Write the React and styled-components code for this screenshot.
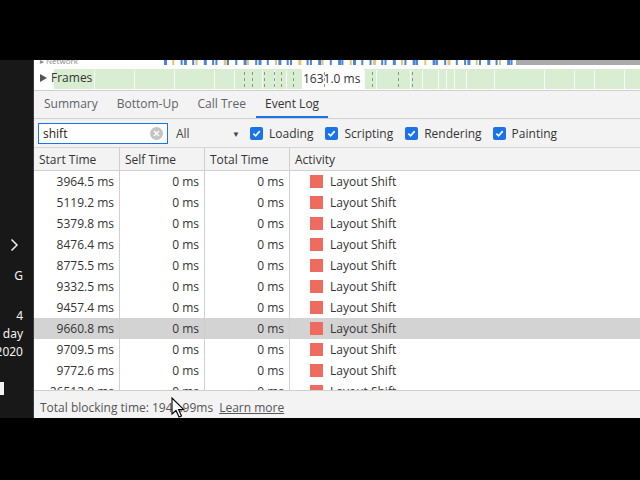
import React from "react";
import styled, { createGlobalStyle } from "styled-components";

const Global = createGlobalStyle`
  html, body { margin: 0; padding: 0; background: #000; }
  * { box-sizing: border-box; }
`;

const Screen = styled.div`
  width: 640px;
  height: 480px;
  background: #000;
  display: flex;
  flex-direction: column;
  font-family: "Open Sans", "Noto Sans", sans-serif;
  font-size: 12px;
  color: #333;
  overflow: hidden;
  position: relative;
`;

const TopBlack = styled.div`
  height: 60px;
  flex: none;
`;

const Middle = styled.div`
  height: 358px;
  flex: none;
  display: flex;
`;

const SideStrip = styled.div`
  width: 34px;
  flex: none;
  background: #181818;
  border-right: 1px solid #3a3a3a;
  color: #f2f2f2;
  font-family: "Noto Sans", sans-serif;
  font-size: 12px;
  display: flex;
  flex-direction: column;
  align-items: flex-end;
  padding: 178px 10px 0 0;
  overflow: hidden;
  line-height: 18px;
`;

const Chevron = styled.div`
  align-self: flex-start;
  padding-left: 10px;
  height: 22px;
`;

const SideText = styled.div`
  white-space: nowrap;
  margin-top: ${(p) => p.$gap || 0}px;
`;

const SideBar = styled.div`
  width: 4px;
  height: 13px;
  background: #f2f2f2;
  align-self: flex-start;
  margin-top: 21px;
`;

const Panel = styled.div`
  flex: 1;
  background: #f3f3f3;
  display: flex;
  flex-direction: column;
  min-width: 0;
`;

const Overview = styled.div`
  height: 31px;
  flex: none;
  background: #fff;
  border-bottom: 1px solid #cfcfcf;
  position: relative;
`;

const FramesLabel = styled.div`
  position: absolute;
  left: 6px;
  top: 9px;
  display: flex;
  align-items: center;
  gap: 4px;
`;

const TimeLabel = styled.div`
  position: absolute;
  left: 269px;
  top: 10px;
`;

const Tabs = styled.div`
  height: 28px;
  flex: none;
  display: flex;
  padding-left: 1px;
  border-bottom: 1px solid #cfcfcf;
`;

const Tab = styled.div`
  padding: 0 9px;
  display: flex;
  align-items: center;
  font-size: 12px;
  color: ${(p) => (p.$active ? "#333" : "#5f6368")};
  border-bottom: 2px solid ${(p) => (p.$active ? "#1a73e8" : "transparent")};
  margin-right: 1px;
`;

const FilterBar = styled.div`
  height: 29px;
  flex: none;
  display: flex;
  align-items: center;
  padding-left: 4px;
  border-bottom: 1px solid #d6d6d6;
`;

const Search = styled.div`
  width: 130px;
  height: 21px;
  border: 1px solid #1a73e8;
  background: #fff;
  display: flex;
  align-items: center;
  padding: 0 4px;
  color: #222;
  justify-content: space-between;
`;

const Clear = styled.span`
  width: 13px;
  height: 13px;
  border-radius: 50%;
  background: #c4c4c4;
  display: flex;
  align-items: center;
  justify-content: center;
`;

const Select = styled.div`
  width: 70px;
  margin-left: 8px;
  display: flex;
  justify-content: space-between;
  align-items: center;
  color: #444;
  padding-right: 6px;
`;

const Arrow = styled.span`
  font-size: 8px;
  color: #444;
`;

const Check = styled.label`
  display: flex;
  align-items: center;
  gap: 6px;
  margin-left: ${(p) => p.$ml}px;
  color: #333;
`;

const Box = styled.span`
  width: 13px;
  height: 13px;
  border-radius: 2px;
  background: #1a73e8;
  display: flex;
  align-items: center;
  justify-content: center;
`;

const Table = styled.div`
  flex: 1;
  background: #fff;
  display: flex;
  flex-direction: column;
  overflow: hidden;
  min-height: 0;
`;

const Grid = styled.div`
  display: grid;
  grid-template-columns: 86px 85px 85px 1fr;
  height: ${(p) => p.$h || 21}px;
  flex: none;
  background: ${(p) => (p.$selected ? "#d3d3d3" : p.$head ? "#f3f3f3" : "transparent")};
  border-bottom: ${(p) => (p.$head ? "1px solid #cfcfcf" : "none")};
`;

const Cell = styled.div`
  display: flex;
  align-items: center;
  justify-content: ${(p) => (p.$right ? "flex-end" : "flex-start")};
  padding: 0 5px;
  border-right: ${(p) => (p.$last ? "none" : "1px solid #cfcfcf")};
  white-space: nowrap;
  overflow: hidden;
  color: #333;
`;

const Swatch = styled.span`
  width: 13px;
  height: 13px;
  background: #ef6a5f;
  margin: 0 7px 0 15px;
  flex: none;
`;

const Footer = styled.div`
  height: 28px;
  flex: none;
  background: #f3f3f3;
  border-top: 1px solid #cfcfcf;
  display: flex;
  align-items: center;
  padding: 5px 0 0 6px;
  gap: 6px;
  color: #555;
`;

const Learn = styled.span`
  text-decoration: underline;
`;

const Cursor = styled.svg`
  position: absolute;
  left: 171px;
  top: 397px;
`;

const rows = [
  "3964.5",
  "5119.2",
  "5379.8",
  "8476.4",
  "8775.5",
  "9332.5",
  "9457.4",
  "9660.8",
  "9709.5",
  "9772.6",
  "26512.0",
];

const CheckMark = () => (
  <svg width="9" height="9" viewBox="0 0 10 10">
    <path d="M1.5 5.2 L4 7.6 L8.6 2.4" stroke="#fff" strokeWidth="1.8" fill="none" />
  </svg>
);

const OverviewStrip = () => {
  const ticks = [];
  for (let i = 0; i < 60; i++) {
    const x = 130 + i * 6.3 + ((i * 7) % 5);
    if (x > 480) break;
    ticks.push(
      <rect key={i} x={x} y={0} width={i % 3 === 0 ? 3 : 2} height={5} fill={i % 4 === 1 ? "#e3c36d" : "#4a83d8"} />
    );
  }
  const lines = [60, 100, 140, 180, 200, 228, 240, 252, 270, 300, 312, 330, 342, 376, 388, 404, 412, 420, 432, 460, 510, 540, 560, 590].map(
    (x, i) => <rect key={i} x={x} y={10} width={1} height={20} fill="#fff" opacity="0.8" />
  );
  const dash = [210, 218, 230, 240, 247, 259, 290, 338, 364, 378].map((x, i) => (
    <line key={"d" + i} x1={x + 0.5} y1={12} x2={x + 0.5} y2={27} stroke="#6f8a62" strokeDasharray="3 3" opacity="0.8" />
  ));
  return (
    <svg width="606" height="31" style={{ position: "absolute", left: 0, top: 0 }}>
      <rect x="0" y="8" width="606" height="22" fill="#fff" />
      <rect x="20" y="9" width="248" height="20" fill="#d8edd2" />
      <rect x="330" y="9" width="276" height="20" fill="#d8edd2" />
      {lines}
      {dash}
      {ticks}
      <rect x="482" y="0" width="124" height="5" fill="#aaa" />
      <text x="6" y="4" fontSize="8" fill="#888">▸ Network</text>
    </svg>
  );
};

export default function App() {
  return (
    <Screen>
      <Global />
      <TopBlack />
      <Middle>
        <SideStrip>
          <Chevron>
            <svg width="9" height="14" viewBox="0 0 9 14">
              <path d="M1.5 1.5 L7 7 L1.5 12.5" stroke="#eee" strokeWidth="1.5" fill="none" />
            </svg>
          </Chevron>
          <SideText $gap={7}>G</SideText>
          <SideText $gap={22}>4</SideText>
          <SideText>day</SideText>
          <SideText>2020</SideText>
          <SideBar />
        </SideStrip>
        <Panel>
          <Overview>
            <OverviewStrip />
            <FramesLabel>
              <svg width="7" height="8" viewBox="0 0 7 8">
                <path d="M0 0 L7 4 L0 8 Z" fill="#555" />
              </svg>
              Frames
            </FramesLabel>
            <TimeLabel>1631.0 ms</TimeLabel>
          </Overview>
          <Tabs>
            <Tab>Summary</Tab>
            <Tab>Bottom-Up</Tab>
            <Tab>Call Tree</Tab>
            <Tab $active>Event Log</Tab>
          </Tabs>
          <FilterBar>
            <Search>
              shift
              <Clear>
                <svg width="7" height="7" viewBox="0 0 7 7">
                  <path d="M1 1 L6 6 M6 1 L1 6" stroke="#fff" strokeWidth="1.4" />
                </svg>
              </Clear>
            </Search>
            <Select>
              All <Arrow>▼</Arrow>
            </Select>
            <Check $ml={4}>
              <Box>
                <CheckMark />
              </Box>
              Loading
            </Check>
            <Check $ml={12}>
              <Box>
                <CheckMark />
              </Box>
              Scripting
            </Check>
            <Check $ml={12}>
              <Box>
                <CheckMark />
              </Box>
              Rendering
            </Check>
            <Check $ml={11}>
              <Box>
                <CheckMark />
              </Box>
              Painting
            </Check>
          </FilterBar>
          <Table>
            <Grid $head $h={23}>
              <Cell>Start Time</Cell>
              <Cell>Self Time</Cell>
              <Cell>Total Time</Cell>
              <Cell $last>Activity</Cell>
            </Grid>
            {rows.map((r) => (
              <Grid key={r} $selected={r === "9660.8"}>
                <Cell $right>{r} ms</Cell>
                <Cell $right>0 ms</Cell>
                <Cell $right>0 ms</Cell>
                <Cell $last>
                  <Swatch />
                  Layout Shift
                </Cell>
              </Grid>
            ))}
          </Table>
          <Footer>
            <span>Total blocking time: 1945.99ms</span>
            <Learn>Learn more</Learn>
          </Footer>
        </Panel>
      </Middle>
      <Cursor width="14" height="22" viewBox="0 0 14 22">
        <path d="M1 1 L1 17 L5 13.5 L8 20 L10.5 19 L7.6 12.6 L12.8 12.6 Z" fill="#fff" stroke="#000" strokeWidth="1.1" />
      </Cursor>
    </Screen>
  );
}
